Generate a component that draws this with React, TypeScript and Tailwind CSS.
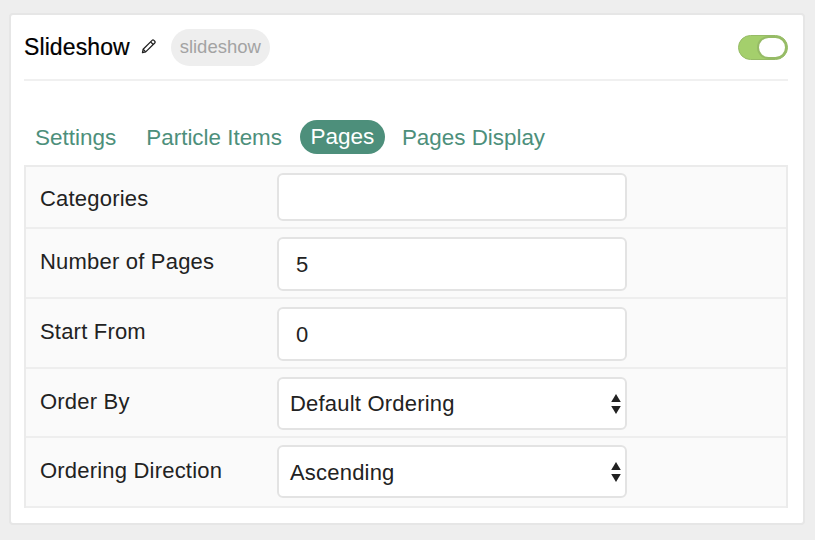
const tabs = ["Settings", "Particle Items", "Pages", "Pages Display"];

function Pencil() {
  return (
    <svg width="16" height="16" viewBox="0 0 15 15" fill="none" stroke="#222" strokeWidth="1.2" className="ml-[11px] mt-[-2px]">
      <path d="M2 10.6 10.4 2.2c.5-.5 1.2-.5 1.7 0l.8.8c.5.5.5 1.2 0 1.7L4.4 13l-3 .8z" strokeLinejoin="round" />
      <path d="M9 3.6 11.5 6.1M2 10.6 4.4 13" />
    </svg>
  );
}

function Arrows() {
  return (
    <svg width="10" height="20" viewBox="0 0 10 20" className="shrink-0" fill="#222">
      <path d="M5 0 9.8 8H.2z" />
      <path d="M5 20 .2 12h9.6z" />
    </svg>
  );
}

function Row({ label, children, className }: { label: string; children: React.ReactNode; className: string }) {
  return (
    <div className={`flex border-b-2 border-[#eeeeee] pl-[14px] ${className}`}>
      <div className="w-[237px] shrink-0 text-[22px] tracking-[0.2px] leading-[24px] text-[#222]">{label}</div>
      {children}
    </div>
  );
}

function Field({ value, className }: { value?: string; className: string }) {
  return (
    <div className={`w-[350px] bg-white border-2 border-[#e3e3e3] rounded-[6px] pl-[17px] flex items-center text-[22px] text-[#222] ${className}`}>
      {value}
    </div>
  );
}

function Select({ value, className }: { value: string; className: string }) {
  return (
    <div className={`w-[350px] bg-white border-2 border-[#e3e3e3] rounded-[6px] pl-[11px] pr-[4px] flex items-center justify-between text-[22px] tracking-[0.2px] text-[#222] ${className}`}>
      {value}
      <Arrows />
    </div>
  );
}

export default function App() {
  return (
    <div className="w-[815px] h-[540px] bg-[#eeeeee] pt-[13px] pl-[9px] font-['Liberation_Sans',sans-serif] overflow-hidden">
      <div className="w-[796px] h-[512px] bg-white border-2 border-[#e6e6e6] rounded-[4px] pl-[13px] pr-[15px]">
        <div className="h-[66px] border-b-2 border-[#f0f0f0] flex items-center">
          <span className="text-[23px] tracking-[0.1px] font-normal text-black [-webkit-text-stroke:0.2px_black]">Slideshow</span>
          <Pencil />
          <span className="ml-[14px] h-[37px] w-[99px] justify-center rounded-full bg-[#eeeeee] text-[#a3a3a3] text-[18.5px] flex items-center">slideshow</span>
          <div className="ml-auto w-[50px] h-[25px] rounded-full bg-[#a4cf6c] border border-[#96bb66] relative">
            <div className="absolute right-0 top-0 bottom-0 w-[30px] rounded-full bg-white border-2 border-[#96bb66]" />
          </div>
        </div>
        <div className="flex items-center mt-[39px] h-[34px] text-[22.5px] text-[#4d8f7b]">
          <span className="px-[11px] translate-y-[1px]">{tabs[0]}</span>
          <span className="ml-[8px] px-[11px] translate-y-[1px] text-[22.4px]">{tabs[1]}</span>
          <span className="ml-[7px] h-[34px] w-[85px] justify-center rounded-full bg-[#4d8f7b] text-white flex items-center">{tabs[2]}</span>
          <span className="ml-[6px] px-[11px] translate-y-[1px] text-[22.4px]">{tabs[3]}</span>
        </div>
        <div className="mt-[11px] w-[764px] h-[343px] bg-[#fafafa] border-x-2 border-t-2 border-[#ebebeb]">
          <Row label="Categories" className="h-[62px] pt-[20px]">
            <Field className="h-[48px] mt-[-14px]" />
          </Row>
          <Row label="Number of Pages" className="h-[70px] pt-[21px]">
            <Field value="5" className="h-[54px] mt-[-13px]" />
          </Row>
          <Row label="Start From" className="h-[70px] pt-[21px]">
            <Field value="0" className="h-[54px] mt-[-13px]" />
          </Row>
          <Row label="Order By" className="h-[69px] pt-[21px]">
            <Select value="Default Ordering" className="h-[53px] mt-[-13px]" />
          </Row>
          <Row label="Ordering Direction" className="h-[70px] pt-[21px] border-[#e3e3e3]">
            <Select value="Ascending" className="h-[53px] mt-[-14px] pt-[1px]" />
          </Row>
        </div>
      </div>
    </div>
  );
}
